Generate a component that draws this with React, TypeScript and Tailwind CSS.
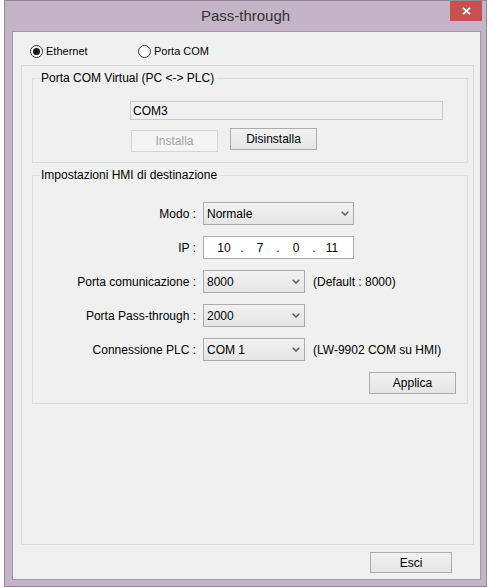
import React from 'react';

const sans = "font-['Liberation_Sans',Arial,sans-serif]";

function Chevron() {
    return (
        <svg width="8" height="5" viewBox="0 0 8 5" className="shrink-0">
            <path d="M0.7 0.7 L4 4 L7.3 0.7" stroke="#5c5c5c" strokeWidth="1.5" fill="none" />
        </svg>
    );
}

function Select({ value, width }: { value: string; width: string }) {
    return (
        <div className={`${width} h-[23px] border border-[#acacac] bg-linear-to-b from-[#f2f2f2] to-[#e5e5e5] flex items-center justify-between pl-[3px] pr-[4px]`}>
            <span>{value}</span>
            <Chevron />
        </div>
    );
}

function Radio({ label, checked }: { label: string; checked?: boolean }) {
    return (
        <div className="flex items-center">
            <span className="w-[13px] h-[13px] rounded-full border border-[#333] bg-white flex items-center justify-center">
                {checked && <span className="w-[7px] h-[7px] rounded-full bg-[#1a1a1a]" />}
            </span>
            <span className="ml-[3px] text-[11px] leading-[13px]">{label}</span>
        </div>
    );
}

function Button({
    label,
    disabled,
    size = 'w-[87px] h-[22px]',
    className = '',
}: {
    label: string;
    disabled?: boolean;
    size?: string;
    className?: string;
}) {
    return (
        <div
            className={`${size} flex items-center justify-center border ${
                disabled
                    ? 'border-[#d5d5d5] bg-[#f4f4f4] text-[#a3a3a3]'
                    : 'border-[#acacac] bg-linear-to-b from-[#f2f2f2] to-[#e5e5e5] text-black'
            } ${className}`}
        >
            {label}
        </div>
    );
}

function Row({ label, children }: { label: string; children: React.ReactNode }) {
    return (
        <div className="flex items-center h-[23px]">
            <span className="w-[164px] text-right pr-[1px]">{label}</span>
            <div className="ml-[6px] flex items-center">{children}</div>
        </div>
    );
}

export default function App() {
    const ip = ['10', '7', '0', '11'];

    return (
        <div className={`w-[489px] h-[588px] bg-white text-[12px] text-black ${sans}`}>
            <div className="ml-[4px] w-[483px] h-[587px] border border-[#94889a] bg-[#c4b4c8] flex flex-col relative">
                {/* title bar */}
                <div className="h-[30px] shrink-0 flex justify-center">
                    <span className="pt-[6px] text-[15px] leading-[18px] text-[#333]">Pass-through</span>
                </div>
                <div className="absolute top-0 right-[4px] w-[32px] h-[20px] bg-[#c75050] flex items-center justify-center">
                    <svg width="9" height="8" viewBox="0 0 9 8">
                        <path d="M1 0.8 L8 7.2 M8 0.8 L1 7.2" stroke="white" strokeWidth="1.8" />
                    </svg>
                </div>

                {/* client area */}
                <div className="ml-[7px] w-[469px] h-[549px] border border-[#a497a8] bg-[#f0f0f0] flex flex-col">
                    <div className="mt-[13px] pl-[17px] flex">
                        <div className="w-[108px]">
                            <Radio label="Ethernet" checked />
                        </div>
                        <Radio label="Porta COM" />
                    </div>

                    <div className="mt-[7px] ml-[8px] w-[453px] h-[480px] border border-[#d9d9d9] pt-[5px] flex flex-col">
                        <fieldset className="ml-[10px] mr-[5px] border border-[#dcdcdc] pb-[10px]">
                            <legend className="ml-[7px] pl-[1px] pr-[3px] leading-[14px]">Porta COM Virtual (PC &lt;-&gt; PLC)</legend>
                            <div className="mt-[16px] ml-[97px] w-[313px] h-[19px] border border-[#c8c8c8] bg-[#f0f0f0] flex items-center pl-[2px]">
                                COM3
                            </div>
                            <div className="mt-[8px] flex items-start">
                                <Button label="Installa" disabled className="ml-[98px] mt-[2px]" />
                                <Button label="Disinstalla" className="ml-[12px]" />
                            </div>
                        </fieldset>

                        <fieldset className="mt-[5px] ml-[10px] mr-[5px] border border-[#dcdcdc] pb-[9px]">
                            <legend className="ml-[7px] pl-[1px] pr-[3px] leading-[14px]">Impostazioni HMI di destinazione</legend>
                            <div className="mt-[20px] flex flex-col gap-[11px]">
                                <Row label="Modo :">
                                    <Select value="Normale" width="w-[151px]" />
                                </Row>
                                <Row label="IP :">
                                    <div className="w-[151px] h-[23px] border border-[#adadad] bg-white flex items-center pl-[5px]">
                                        {ip.map((n, i) => (
                                            <React.Fragment key={i}>
                                                {i > 0 && <span className="w-[6px] text-center">.</span>}
                                                <span className="w-[30px] text-center">{n}</span>
                                            </React.Fragment>
                                        ))}
                                    </div>
                                </Row>
                                <Row label="Porta comunicazione :">
                                    <Select value="8000" width="w-[102px]" />
                                    <span className="ml-[8px]">(Default : 8000)</span>
                                </Row>
                                <Row label="Porta Pass-through :">
                                    <Select value="2000" width="w-[102px]" />
                                </Row>
                                <Row label="Connessione PLC :">
                                    <Select value="COM 1" width="w-[102px]" />
                                    <span className="ml-[8px]">(LW-9902 COM su HMI)</span>
                                </Row>
                            </div>
                            <Button label="Applica" className="mt-[11px] ml-[336px]" />
                        </fieldset>
                    </div>

                    <div className="mt-[7px] flex justify-end pr-[28px]">
                        <Button label="Esci" size="w-[82px] h-[21px]" />
                    </div>
                </div>
            </div>
        </div>
    );
}
